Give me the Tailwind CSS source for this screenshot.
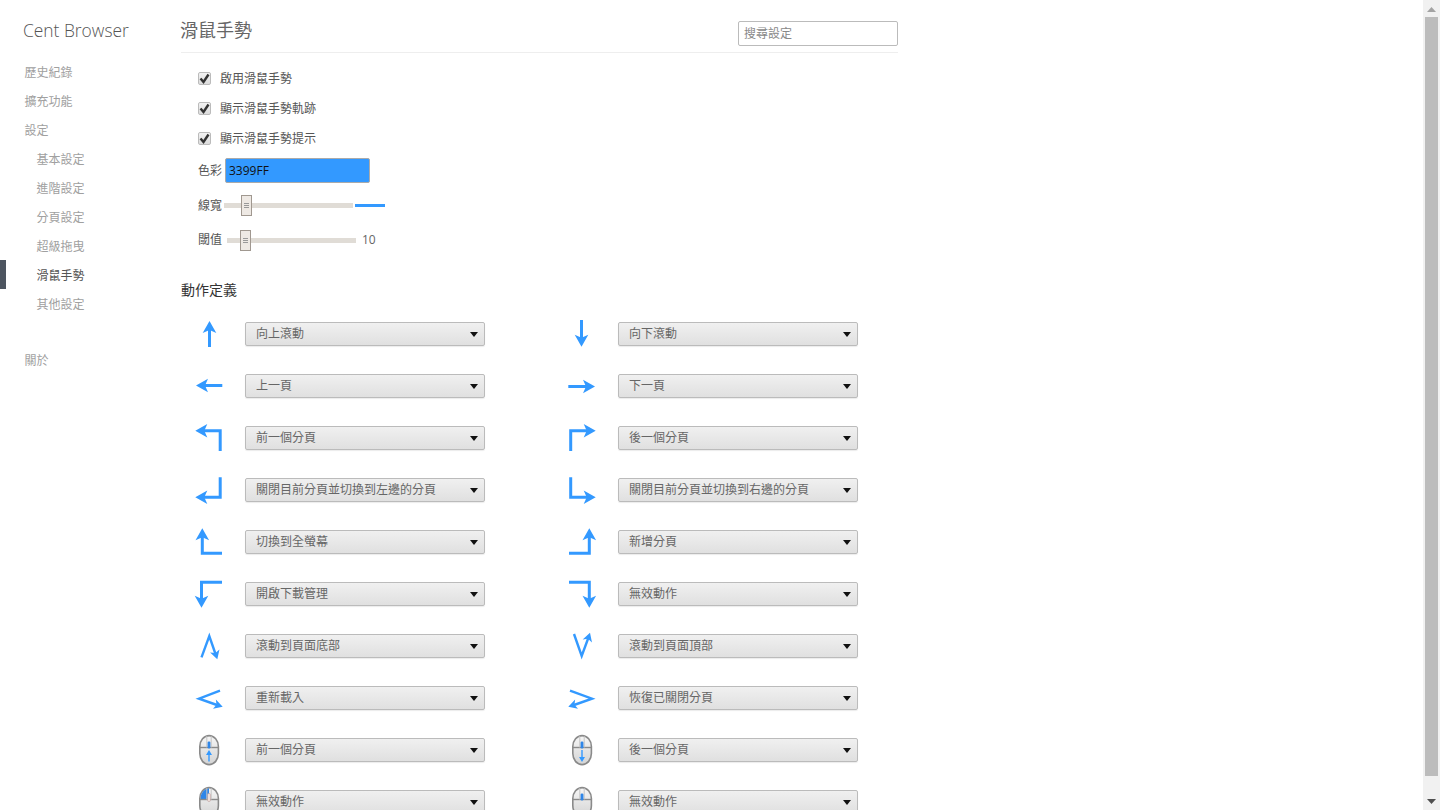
<!DOCTYPE html>
<html lang="zh-Hant">

<head>
    <meta charset="UTF-8" />
    <title>滑鼠手勢 | Cent Browser</title>
    <script src="https://cdn.jsdelivr.net/npm/@tailwindcss/browser@4"></script>
</head>

<body class="bg-white h-[810px] overflow-hidden flex font-['Open_Sans','Noto_Sans_CJK_TC',sans-serif] text-xs text-[#666]">
    <!-- Sidebar -->
    <aside class="w-[181px] shrink-0">
        <div class="pl-[23px] pt-[18px] h-[60px] text-[17.4px] font-light leading-6 text-[#555]">Cent Browser</div>
        <nav class="text-[#a0a0a0]">
            <div class="h-[29px] pl-[24.5px] leading-[24px] pt-px">歷史紀錄</div>
            <div class="h-[29px] pl-[24.5px] leading-[24px] pt-px">擴充功能</div>
            <div class="h-[29px] pl-[24.5px] leading-[24px] pt-px">設定</div>
            <div class="h-[29px] pl-[36.5px] leading-[24px] pt-px">基本設定</div>
            <div class="h-[29px] pl-[36.5px] leading-[24px] pt-px">進階設定</div>
            <div class="h-[29px] pl-[36.5px] leading-[24px] pt-px">分頁設定</div>
            <div class="h-[29px] pl-[36.5px] leading-[24px] pt-px">超級拖曳</div>
            <div class="h-[29px] pl-[36.5px] leading-[24px] pt-px text-[#555] relative">
                <span class="absolute left-0 top-[-3px] w-[6px] h-[29px] bg-[#4d5560]"></span>滑鼠手勢
            </div>
            <div class="h-[29px] pl-[36.5px] leading-[24px] pt-px">其他設定</div>
            <div class="h-[27px]"></div>
            <div class="h-[29px] pl-[24.5px] leading-[24px] pt-px">關於</div>
        </nav>
    </aside>

    <!-- Page Content -->
    <main class="w-[717px] shrink-0">
        <header class="h-[53px] border-b border-[#eeeeee] flex justify-between items-start">
            <h1 class="text-lg leading-6 pt-[18px] -ml-px text-[#666]">滑鼠手勢</h1>
            <input type="text" placeholder="搜尋設定" class="mt-[21px] w-[160px] h-[25px] px-[5px] border border-[#bbbbbb] rounded-[2px] text-xs placeholder:text-[#888]" />
        </header>

        <section class="pl-[17px] pt-[10px] text-[#555]">
            <div class="h-[30px] flex items-center gap-[9px]">
                <span class="w-[13px] h-[13px] border border-[#bbb] rounded-[2px] bg-linear-to-b from-[#f2f2f2] to-[#dcdcdc] flex items-center justify-center">
                    <svg width="11" height="11" viewBox="0 0 11 11"><path d="M1.5 5.5 L4.5 9 L9.5 1.5" fill="none" stroke="#333" stroke-width="2.4" /></svg>
                </span>
                <span class="pt-[2px]">啟用滑鼠手勢</span>
            </div>
            <div class="h-[30px] flex items-center gap-[9px]">
                <span class="w-[13px] h-[13px] border border-[#bbb] rounded-[2px] bg-linear-to-b from-[#f2f2f2] to-[#dcdcdc] flex items-center justify-center">
                    <svg width="11" height="11" viewBox="0 0 11 11"><path d="M1.5 5.5 L4.5 9 L9.5 1.5" fill="none" stroke="#333" stroke-width="2.4" /></svg>
                </span>
                <span class="pt-[2px]">顯示滑鼠手勢軌跡</span>
            </div>
            <div class="h-[30px] flex items-center gap-[9px]">
                <span class="w-[13px] h-[13px] border border-[#bbb] rounded-[2px] bg-linear-to-b from-[#f2f2f2] to-[#dcdcdc] flex items-center justify-center">
                    <svg width="11" height="11" viewBox="0 0 11 11"><path d="M1.5 5.5 L4.5 9 L9.5 1.5" fill="none" stroke="#333" stroke-width="2.4" /></svg>
                </span>
                <span class="pt-[2px]">顯示滑鼠手勢提示</span>
            </div>

            <div class="mt-[5px] h-[25px] flex items-center">
                <span class="w-[27px]">色彩</span>
                <input type="text" value="3399FF" class="w-[145px] h-[25px] px-[3px] bg-[#3399ff] border border-[#aaaaaa] rounded-[2px] text-xs text-[#111]" />
            </div>

            <div class="mt-[12px] h-[21px] flex items-center">
                <span class="w-[26px]">線寬</span>
                <div class="relative w-[129px] h-[5px] bg-[#e0dcd6]">
                    <div class="absolute left-[17px] top-[-8px] w-[11px] h-[21px] bg-[#eee9e4] border border-[#a09890] flex flex-col items-center justify-center gap-[1px]">
                        <i class="block w-[5px] h-px bg-[#999]"></i><i class="block w-[5px] h-px bg-[#999]"></i><i class="block w-[5px] h-px bg-[#999]"></i>
                    </div>
                </div>
                <span class="ml-[2px] w-[30px] h-[3px] bg-[#3399ff]"></span>
            </div>

            <div class="mt-[14px] h-[21px] flex items-center">
                <span class="w-[29px] -mt-[2px]">閾值</span>
                <div class="relative w-[129px] h-[5px] bg-[#e0dcd6]">
                    <div class="absolute left-[13px] top-[-8px] w-[11px] h-[21px] bg-[#eee9e4] border border-[#a09890] flex flex-col items-center justify-center gap-[1px]">
                        <i class="block w-[5px] h-px bg-[#999]"></i><i class="block w-[5px] h-px bg-[#999]"></i><i class="block w-[5px] h-px bg-[#999]"></i>
                    </div>
                </div>
                <span class="ml-[6px] -mt-[2px] text-[#666]">10</span>
            </div>
        </section>

        <h2 class="mt-[29px] h-[20px] leading-[20px] text-sm font-normal text-[#333]">動作定義</h2>

        <div id="gestures" class="mt-[8px] grid grid-cols-[373px_373px]"></div>
    </main>

    <!-- Scrollbar -->
    <div class="fixed right-0 top-0 bottom-0 w-[17px] bg-[#f1f1f1] flex flex-col items-center">
        <svg class="mt-[7px]" width="9" height="5" viewBox="0 0 9 5"><path d="M4.5 0 L9 5 H0 Z" fill="#a3a3a3" /></svg>
        <div class="mt-[5px] w-[13px] h-[759px] bg-[#bcbcbc]"></div>
        <svg class="mt-[23px]" width="9" height="5" viewBox="0 0 9 5"><path d="M0 0 H9 L4.5 5 Z" fill="#505050" /></svg>
    </div>

    <script>
        const BLUE = "#3399ff";

        // arrow: stroke path plus a notched head, tip at x,y, rotated by deg
        const arrow = (d, x, y, deg, w = 3, s = 1) => `
            <path d="${d}" fill="none" stroke="${BLUE}" stroke-width="${w}" />
            <polygon points="0,0 -12,-6.8 -9,0 -12,6.8" fill="${BLUE}" transform="translate(${x} ${y}) rotate(${deg}) scale(${s})" />`;

        const mouse = (inner, over = "") => `
            <defs><linearGradient id="mb" x1="0" y1="0" x2="0" y2="1"><stop offset="0" stop-color="#f6f6f6" /><stop offset="1" stop-color="#d4d4d4" /></linearGradient></defs>
            <rect x="5.8" y="1.6" width="18.6" height="29" rx="9.3" ry="11" fill="url(#mb)" stroke="#8a8a8a" stroke-width="1.6" />
            ${over}
            <path d="M6 13.5 H24" stroke="#8a8a8a" stroke-width="1.4" />
            <path d="M12.8 2 V13.5 M17.2 2 V13.5" stroke="#c4c4c4" stroke-width="1" />
            ${inner}`;

        const wheel = `<rect x="13.6" y="7.5" width="2.8" height="7" rx="1.2" fill="#2f86e8" />`;

        const icons = {
            up: arrow("M15.5 29 V10", 15.5, 3, -90),
            down: arrow("M14.5 2 V20", 14.5, 28.7, 90),
            left: arrow("M28.3 15.5 H9", 2, 15.5, 180),
            right: arrow("M1.3 16.5 H20", 28, 16.5, 0),
            leftUpTurn: arrow("M26.2 29 V8.8 H8", 1.3, 8.8, 180),
            rightUpTurn: arrow("M3.7 29 V8.8 H22", 28.7, 8.8, 0),
            leftDownTurn: arrow("M26.2 3.3 V23.3 H8", 1.3, 23.3, 180),
            rightDownTurn: arrow("M3.7 3.3 V23.3 H22", 28.7, 23.3, 0),
            upLeftCorner: arrow("M28 27.3 H8.3 V9", 8.3, 2.3, -90),
            upRightCorner: arrow("M2 27.3 H22.3 V9", 22.3, 2.3, -90),
            downLeftCorner: arrow("M28 4.3 H7.5 V23", 7.5, 29.7, 90),
            downRightCorner: arrow("M2 4.3 H22.3 V23", 22.3, 29.7, 90),
            upDown: arrow("M7.5 27.3 L15.3 6 L21.5 24", 23.3, 29.3, 73, 2.4, 0.72),
            downUp: arrow("M7 4 L14.7 26 L21.3 8", 23, 2.7, -72, 2.4, 0.72),
            leftRight: arrow("M26 8.7 L5 16.7 L23 23", 28.7, 24.7, 17, 2.4, 0.72),
            rightLeft: arrow("M3 8.7 L25 16.7 L7 23", 1.3, 24.7, 163, 2.4, 0.72),
            wheelUp: mouse(wheel + `<path d="M15 27.5 V19" stroke="${BLUE}" stroke-width="1.4" /><path d="M15 16 L18 21 H12 Z" fill="${BLUE}" />`),
            wheelDown: mouse(wheel + `<path d="M15 16 V24" stroke="${BLUE}" stroke-width="1.4" /><path d="M15 28 L18 23 H12 Z" fill="${BLUE}" />`),
            leftButton: mouse(`<rect x="13.6" y="7.5" width="2.8" height="8" rx="1.2" fill="#f3e6e0" stroke="#b99" stroke-width=".6" />`, `<path d="M6.5 13 A9 10.5 0 0 1 15 2.2 V13 Z" fill="#2f86e8" />`),
            middleButton: mouse(wheel),
        };

        const rows = [
            ["up", "向上滾動", "down", "向下滾動"],
            ["left", "上一頁", "right", "下一頁"],
            ["leftUpTurn", "前一個分頁", "rightUpTurn", "後一個分頁"],
            ["leftDownTurn", "關閉目前分頁並切換到左邊的分頁", "rightDownTurn", "關閉目前分頁並切換到右邊的分頁"],
            ["upLeftCorner", "切換到全螢幕", "upRightCorner", "新增分頁"],
            ["downLeftCorner", "開啟下載管理", "downRightCorner", "無效動作"],
            ["upDown", "滾動到頁面底部", "downUp", "滾動到頁面頂部"],
            ["leftRight", "重新載入", "rightLeft", "恢復已關閉分頁"],
            ["wheelUp", "前一個分頁", "wheelDown", "後一個分頁"],
            ["leftButton", "無效動作", "middleButton", "無效動作"],
        ];

        const cell = (icon, label) => `
            <div class="h-[52px] flex items-center pl-[13px]">
                <svg class="shrink-0" width="32" height="32" viewBox="0 0 32 32">${icons[icon]}</svg>
                <div class="relative ml-[19px] w-[240px] h-[24px]">
                    <select class="appearance-none w-full h-full pl-[10px] bg-linear-to-b from-[#f0f0f0] to-[#e0e0e0] border border-[#bbbbbb] rounded-[2px] shadow-[0_1px_1px_rgba(0,0,0,0.08)] text-xs text-[#666]"><option>${label}</option></select>
                    <svg class="absolute right-[7px] top-[10px]" width="8" height="5" viewBox="0 0 8 5"><path d="M0 0 H8 L4 5 Z" fill="#111" /></svg>
                </div>
            </div>`;

        document.getElementById("gestures").innerHTML = rows
            .map(r => cell(r[0], r[1]) + cell(r[2], r[3]))
            .join("");
    </script>
</body>

</html>
